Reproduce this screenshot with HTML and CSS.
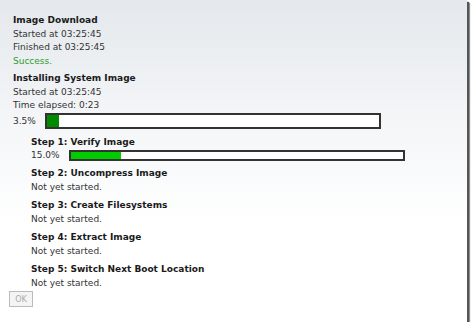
FILE: index.html
```html
<!DOCTYPE html>
<html lang="en">
<head>
    <meta charset="UTF-8">
    <title>Install Image</title>
    <link rel="stylesheet" href="styles.css">
</head>
<body>
    <div class="panel">
        <div class="section">
            <p class="title">Image Download</p>
            <p>Started at 03:25:45</p>
            <p>Finished at 03:25:45</p>
            <p class="success">Success.</p>
        </div>

        <div class="section">
            <p class="title">Installing System Image</p>
            <p>Started at 03:25:45</p>
            <p>Time elapsed: 0:23</p>
            <div class="progress-row">
                <span class="pct">3.5%</span>
                <div class="bar main-bar"><div class="fill dark" style="width: 3.5%"></div></div>
            </div>
        </div>

        <div class="steps">
            <div class="step">
                <p class="title">Step 1: Verify Image</p>
                <div class="progress-row small">
                    <span class="pct">15.0%</span>
                    <div class="bar step-bar"><div class="fill bright" style="width: 15%"></div></div>
                </div>
            </div>
            <div class="step">
                <p class="title">Step 2: Uncompress Image</p>
                <p>Not yet started.</p>
            </div>
            <div class="step">
                <p class="title">Step 3: Create Filesystems</p>
                <p>Not yet started.</p>
            </div>
            <div class="step">
                <p class="title">Step 4: Extract Image</p>
                <p>Not yet started.</p>
            </div>
            <div class="step">
                <p class="title">Step 5: Switch Next Boot Location</p>
                <p>Not yet started.</p>
            </div>
        </div>

        <button class="ok-btn" disabled>OK</button>
    </div>
</body>
</html>
```

FILE: styles.css
```css
body {
    margin: 0;
    background: #fff;
    font-family: "DejaVu Sans", Verdana, sans-serif;
    font-size: 9px;
    color: #333;
}
.panel {
    width: 467px;
    height: 322px;
    box-sizing: border-box;
    padding: 14px 0 0 13px;
    background: linear-gradient(to bottom, #e4e8ec 0%, #f3f5f7 35%, #ffffff 70%);
    box-shadow: 2px 2px 1px #555, 3px 3px 1px #999;
}
p {
    margin: 0;
    line-height: 13.5px;
}
.title {
    font-weight: bold;
    color: #1a1a1a;
}
.success {
    color: #2e9a2e;
}
.section {
    margin-bottom: 4px;
}
.progress-row {
    display: flex;
    align-items: center;
    height: 16px;
}
.progress-row.small {
    height: 12px;
}
.pct {
    width: 32px;
}
.bar {
    box-sizing: border-box;
    width: 336px;
    border: 2px solid #333;
    background: #fff;
}
.main-bar {
    height: 16px;
}
.step-bar {
    height: 11px;
    margin-left: 6px;
}
.fill {
    height: 100%;
}
.fill.dark {
    background: #008a00;
}
.fill.bright {
    background: #00cc00;
}
.steps {
    padding-left: 18px;
    margin-top: 7px;
}
.step {
    margin-bottom: 5px;
}
.step:first-child {
    margin-bottom: 6px;
}
.step:last-child {
    margin-bottom: 1px;
}
.ok-btn {
    margin: 0 0 0 -4px;
    width: 24px;
    height: 16px;
    padding: 0;
    font-family: "DejaVu Sans", Verdana, sans-serif;
    font-size: 8px;
    color: #aaa;
    background: #f4f4f4;
    border: 1px solid #bbb;
}
```
